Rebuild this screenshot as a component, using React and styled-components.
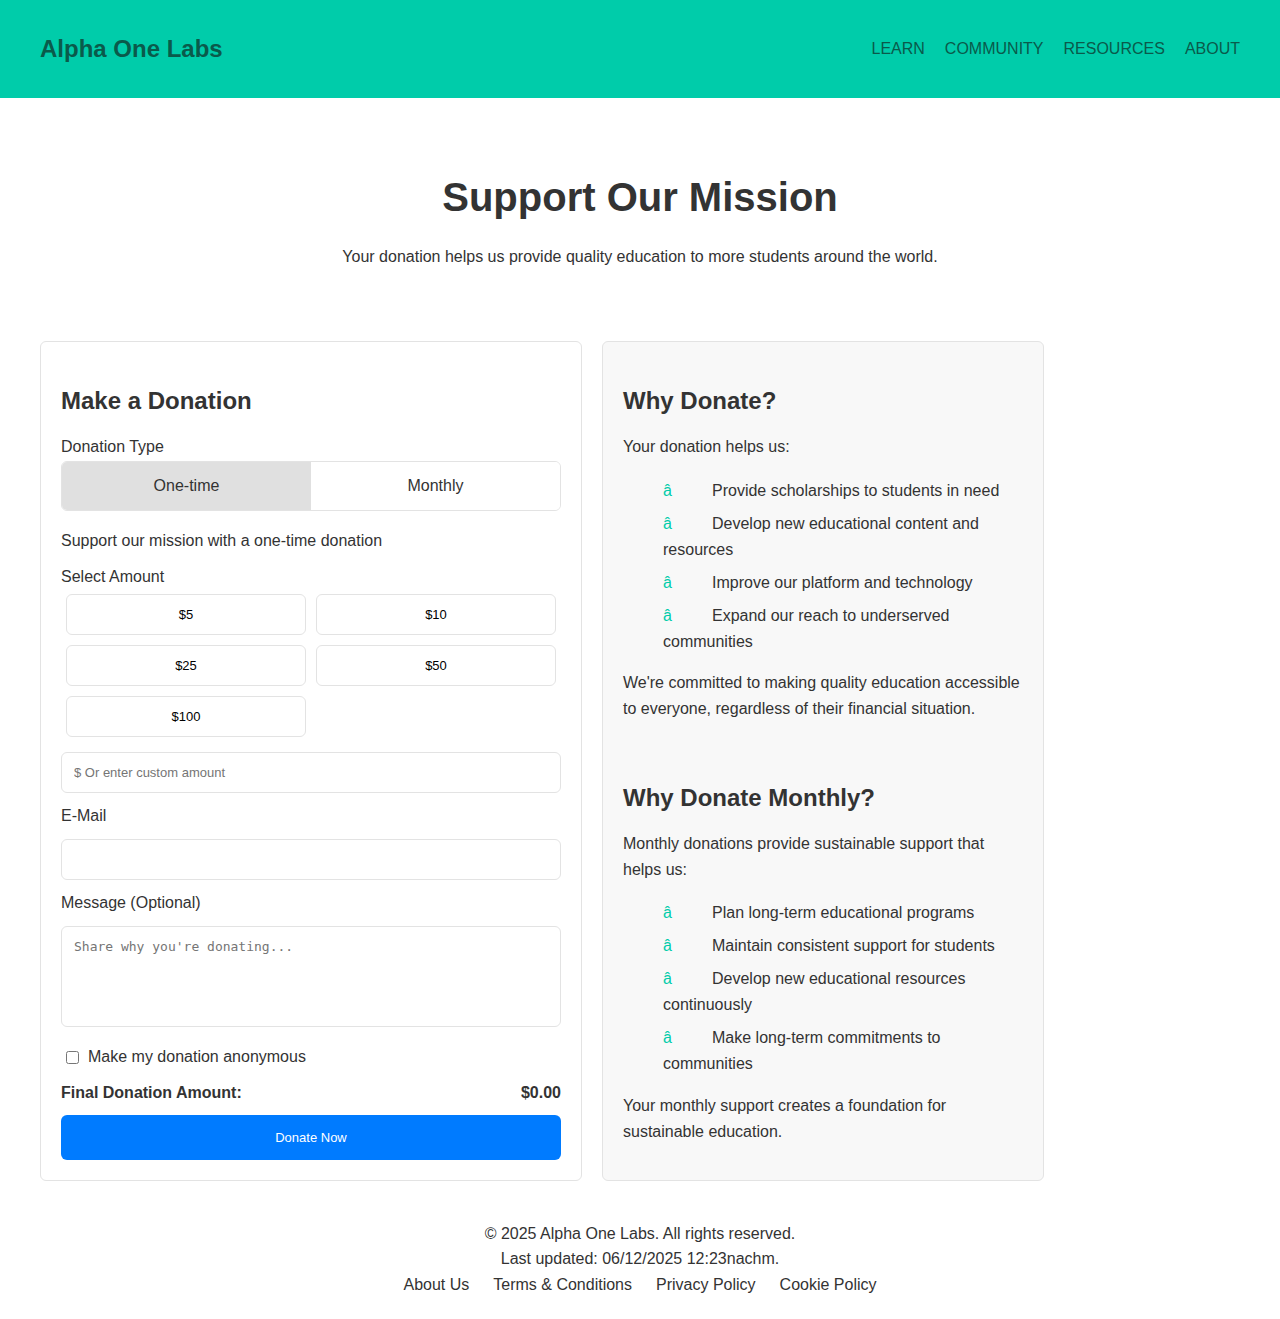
import React, { useState } from "react";
import styled, { createGlobalStyle } from "styled-components";

const Global = createGlobalStyle`
  * { box-sizing: border-box; }
  html, body { margin: 0; padding: 0; }
  body {
    font-family: "Liberation Sans", Arial, Helvetica, sans-serif;
    color: #333;
    background: #fff;
    line-height: 1.6;
    font-size: 16px;
  }
`;

const Header = styled.header`
  height: 98px;
  background: #00ccaa;
  display: flex;
  align-items: center;
  justify-content: space-between;
  padding: 0 40px;
`;

const Logo = styled.div`
  font-size: 24px;
  font-weight: 700;
  color: #0a5a4b;
`;

const Nav = styled.nav`
  display: flex;
  gap: 20px;
`;

const NavLink = styled.a`
  font-size: 16px;
  color: #0a5a4b;
  text-decoration: none;
  text-transform: uppercase;
`;

const Main = styled.main`
  padding: 0 40px;
  margin-bottom: 20px;
`;

const Hero = styled.section`
  text-align: center;
  padding-top: 76px;
  margin-bottom: 72px;
`;

const Title = styled.h1`
  font-size: 40px;
  line-height: 46px;
  margin: 0 0 25px;
  font-weight: 700;
`;

const Lead = styled.p`
  margin: 0;
  line-height: 24px;
`;

const Columns = styled.div`
  display: grid;
  grid-template-columns: 542px 442px;
  gap: 20px;
`;

const Card = styled.div`
  border: 1px solid #e3e3e3;
  border-radius: 6px;
  padding: 20px;
  background: ${(p) => (p.$muted ? "#f8f8f8" : "#fff")};
  display: flex;
  flex-direction: column;
`;

const CardTitle = styled.h2`
  font-size: 24px;
  font-weight: 700;
  margin: 20px 0 14px;
  line-height: 1.6;
`;

const Label = styled.label`
  display: block;
  margin-bottom: ${(p) => p.$mb ?? 10}px;
`;

const Toggle = styled.div`
  display: flex;
  border: 1px solid #e3e3e3;
  border-radius: 6px;
  overflow: hidden;
  height: 50px;
  margin-bottom: 17px;
`;

const ToggleButton = styled.button`
  flex: 1;
  border: none;
  background: ${(p) => (p.$active ? "#e0e0e0" : "#fff")};
  color: #333;
  font-family: inherit;
  font-size: 16px;
  cursor: pointer;
`;

const Text = styled.p`
  margin: 0 0 ${(p) => p.$mb ?? 10}px;
`;

const AmountGrid = styled.div`
  display: grid;
  grid-template-columns: 1fr 1fr;
  margin-bottom: 10px;
`;

const AmountButton = styled.button`
  margin: 5px;
  height: 41px;
  border: 1px solid #e3e3e3;
  border-radius: 6px;
  background: #fff;
  color: #000;
  font-family: "Liberation Sans", Arial, sans-serif;
  font-size: 13px;
  cursor: pointer;
`;

const Input = styled.input`
  display: block;
  width: 100%;
  height: 41px;
  border: 1px solid #e3e3e3;
  border-radius: 6px;
  padding: 0 12px;
  font-family: "Liberation Sans", Arial, sans-serif;
  font-size: 13px;
  margin-bottom: 10px;
  color: #333;
  &::placeholder { color: #757575; }
`;

const TextArea = styled.textarea`
  display: block;
  width: 100%;
  height: 101px;
  border: 1px solid #e3e3e3;
  border-radius: 6px;
  padding: 12px;
  font-family: "DejaVu Sans Mono", "Liberation Mono", monospace;
  font-size: 13px;
  resize: none;
  margin: 0 0 17px;
  &::placeholder { color: #757575; }
`;

const CheckRow = styled.label`
  display: flex;
  align-items: center;
  gap: 9px;
  padding-left: 5px;
  margin-bottom: 10px;
`;

const Check = styled.input`
  margin: 0;
  width: 13px;
  height: 13px;
`;

const TotalRow = styled.div`
  display: flex;
  justify-content: space-between;
  font-weight: 700;
  margin-bottom: 9px;
`;

const DonateButton = styled.button`
  height: 45px;
  width: 100%;
  border: none;
  border-radius: 6px;
  background: #007bff;
  color: #fff;
  font-family: "Liberation Sans", Arial, sans-serif;
  font-size: 13px;
  cursor: pointer;
`;

const Section = styled.div`
  margin-top: ${(p) => p.$mt ?? 0}px;
`;

const List = styled.ul`
  list-style: none;
  padding-left: 40px;
  margin: 18px 0 ${(p) => p.$mb ?? 16}px;
`;

const Item = styled.li`
  margin-bottom: 7.6px;
`;

const Bullet = styled.span`
  display: inline-block;
  width: 49px;
  color: #00ccaa;
`;

const Para = styled.p`
  margin: 0 0 ${(p) => p.$mb ?? 0}px;
`;

const Footer = styled.footer`
  text-align: center;
  padding: 20px 0 21px;
`;

const FooterLine = styled.div``;

const FooterLinks = styled.div`
  display: flex;
  justify-content: center;
  gap: 24px;
`;

const FooterLink = styled.a`
  color: #333;
  text-decoration: none;
`;

const amounts = ["$5", "$10", "$25", "$50", "$100"];

const whyItems = [
  "Provide scholarships to students in need",
  "Develop new educational content and resources",
  "Improve our platform and technology",
  "Expand our reach to underserved communities",
];

const monthlyItems = [
  "Plan long-term educational programs",
  "Maintain consistent support for students",
  "Develop new educational resources continuously",
  "Make long-term commitments to communities",
];

export default function App() {
  const [type, setType] = useState("one");
  return (
    <>
      <Global />
      <Header>
        <Logo>Alpha One Labs</Logo>
        <Nav>
          <NavLink href="#">Learn</NavLink>
          <NavLink href="#">Community</NavLink>
          <NavLink href="#">Resources</NavLink>
          <NavLink href="#">About</NavLink>
        </Nav>
      </Header>
      <Main>
        <Hero>
          <Title>Support Our Mission</Title>
          <Lead>
            Your donation helps us provide quality education to more students around the world.
          </Lead>
        </Hero>
        <Columns>
          <Card>
            <CardTitle>Make a Donation</CardTitle>
            <Label $mb={1}>Donation Type</Label>
            <Toggle>
              <ToggleButton $active={type === "one"} onClick={() => setType("one")}>
                One-time
              </ToggleButton>
              <ToggleButton $active={type === "monthly"} onClick={() => setType("monthly")}>
                Monthly
              </ToggleButton>
            </Toggle>
            <Text $mb={10}>Support our mission with a one-time donation</Text>
            <Label $mb={0}>Select Amount</Label>
            <AmountGrid>
              {amounts.map((a) => (
                <AmountButton key={a}>{a}</AmountButton>
              ))}
            </AmountGrid>
            <Input placeholder="$ Or enter custom amount" />
            <Label>E-Mail</Label>
            <Input type="email" />
            <Label $mb={11}>Message (Optional)</Label>
            <TextArea placeholder="Share why you're donating..." />
            <CheckRow>
              <Check type="checkbox" />
              Make my donation anonymous
            </CheckRow>
            <TotalRow>
              <span>Final Donation Amount:</span>
              <span>$0.00</span>
            </TotalRow>
            <DonateButton>Donate Now</DonateButton>
          </Card>
          <Card $muted>
            <Section>
              <CardTitle>Why Donate?</CardTitle>
              <Para>Your donation helps us:</Para>
              <List $mb={16}>
                {whyItems.map((t) => (
                  <Item key={t}>
                    <Bullet>â</Bullet>
                    {t}
                  </Item>
                ))}
              </List>
              <Para>
                We're committed to making quality education accessible to everyone, regardless of
                their financial situation.
              </Para>
            </Section>
            <Section $mt={37}>
              <CardTitle>Why Donate Monthly?</CardTitle>
              <Para>Monthly donations provide sustainable support that helps us:</Para>
              <List $mb={17}>
                {monthlyItems.map((t) => (
                  <Item key={t}>
                    <Bullet>â</Bullet>
                    {t}
                  </Item>
                ))}
              </List>
              <Para $mb={10}>Your monthly support creates a foundation for sustainable education.</Para>
            </Section>
          </Card>
        </Columns>
      </Main>
      <Footer>
        <FooterLine>© 2025 Alpha One Labs. All rights reserved.</FooterLine>
        <FooterLine>Last updated: 06/12/2025 12:23nachm.</FooterLine>
        <FooterLinks>
          <FooterLink href="#">About Us</FooterLink>
          <FooterLink href="#">Terms &amp; Conditions</FooterLink>
          <FooterLink href="#">Privacy Policy</FooterLink>
          <FooterLink href="#">Cookie Policy</FooterLink>
        </FooterLinks>
      </Footer>
    </>
  );
}
